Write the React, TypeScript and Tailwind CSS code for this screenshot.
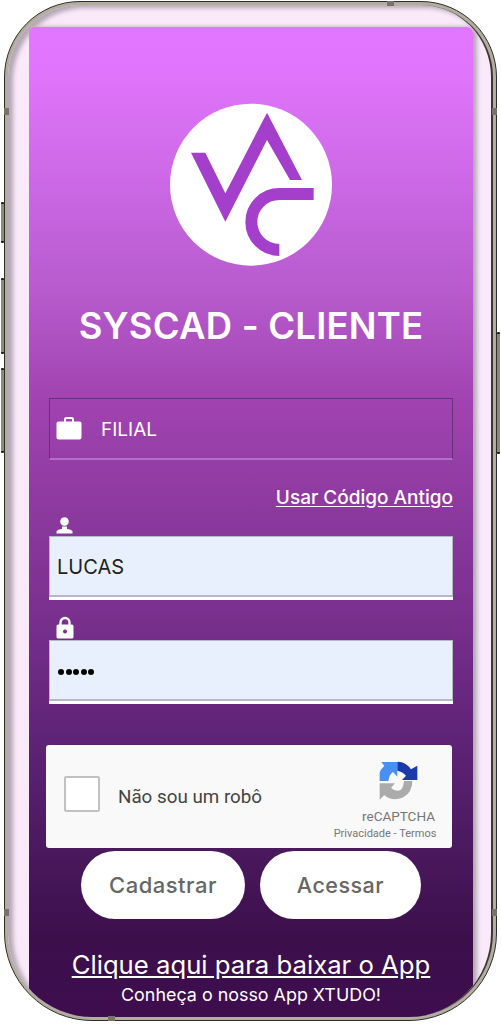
const sideKeys = "absolute w-[3px] bg-[#8f897a] border-y-2 border-[#222] rounded-[1px]";
const seam = "absolute bg-[#77736a]";

const LogoMark = () => (
  <svg className="w-[170px] h-[170px]" viewBox="0 0 510 510">
    <circle cx="255" cy="254" r="243" fill="#fff" />
    <path
      d="M75 158H118L178 280L303 38L408 240H372L303 120L178 365Z"
      fill="#a43fcc"
    />
    <path
      d="M443 282H340A84 84 0 0 0 340 450"
      fill="none"
      stroke="#a43fcc"
      strokeWidth="36"
    />
  </svg>
);

const Briefcase = () => (
  <svg className="w-[26px] h-[24px]" viewBox="0 0 26 24" fill="#fff">
    <path d="M8 6V3.500C8 1.800 9 1 10.500 1h5C17 1 18 1.800 18 3.500V6h-2V3.500c0-.4-.2-.6-.6-.6h-4.800c-.4 0-.6.2-.6.600V6Z" />
    <rect x="0.500" y="5.500" width="25" height="18" rx="2" />
  </svg>
);

const UserIcon = () => (
  <svg className="w-[17px] h-[17px]" viewBox="0 0 17 17" fill="#fff">
    <circle cx="8.500" cy="4.500" r="4.300" />
    <path d="M6 9.500h5v2.500c2.500.3 5 1 5.500 2.200V16.500H.500v-2.300C1 13 3.500 12.300 6 12Z" />
  </svg>
);

const LockIcon = () => (
  <svg className="w-[18px] h-[23px]" viewBox="0 0 18 23">
    <path d="M4.500 10V6.500a4.500 4.500 0 0 1 9 0V10" fill="none" stroke="#fff" strokeWidth="2.400" />
    <path
      fillRule="evenodd"
      d="M2 8.500h14a1.500 1.500 0 0 1 1.500 1.500v11a1.500 1.500 0 0 1-1.500 1.500H2A1.500 1.500 0 0 1 .5 21V10A1.500 1.500 0 0 1 2 8.500ZM9 13.500a2 2 0 1 0 0 4a2 2 0 0 0 0-4Z"
      fill="#fff"
    />
  </svg>
);

const RecaptchaIcon = () => (
  <svg className="w-[60px] h-[50px]" viewBox="0 0 180 150">
    <path d="M32 78V52Q35 42 46 33L37 21H85V65L72 51Q61 58 58 78Z" fill="#4a90f2" />
    <path d="M85 20Q110 20 126 43L145 32V75H99L111 62Q101 50 85 47Z" fill="#1c3aa9" />
    <path d="M130 78Q130 112 103 127Q70 142 46 120L32 134V85H78L66 98Q80 112 95 105Q103 98 105 78Z" fill="#ababab" />
  </svg>
);

export default function App() {
  return (
    <div className="relative w-[501px] h-[1024px] bg-white pt-px px-[4px] font-['Inter',sans-serif] overflow-hidden">
      <div className={`${sideKeys} left-[1px] top-[202px] h-[41px]`} />
      <div className={`${sideKeys} left-[1px] top-[278px] h-[76px]`} />
      <div className={`${sideKeys} left-[1px] top-[368px] h-[85px]`} />
      <div className={`${sideKeys} right-[1px] top-[332px] h-[122px]`} />

      <div className="h-[1020px] rounded-t-[76px] rounded-b-[88px] border border-[#2f2d2a] bg-[#b3ad9f] p-[3px]">
        <div className="h-full rounded-t-[72px] rounded-b-[84px] border-r-2 border-[#3a3835] bg-[#f9e9f9] overflow-hidden shadow-[inset_5px_3px_4px_#b5a8b5] pt-[22px] pl-[21px] pr-[18px]">
          <div className="h-[990px] rounded-t-[6px] bg-[linear-gradient(180deg,#e276ff_0%,#e074fb_5%,#b85ccf_26%,#a043b0_38%,#7c3190_58%,#62257a_70%,#4c1a60_82%,#3c0f4b_92%,#3e0d4e_100%)] shadow-[4px_0_4px_#b5a8b5] px-[20px] pt-[73px] flex flex-col">
            <div className="flex justify-center ml-[-1px]">
              <LogoMark />
            </div>

            <h1 className="mt-[28px] text-center text-white text-[36.500px] leading-[56px] font-semibold tracking-[0.2px] whitespace-nowrap">
              SYSCAD - CLIENTE
            </h1>

            <div className="mt-[44px] h-[62px] flex items-center border border-[#66307a] border-b-[#b170c2] border-b-2 pl-[6px] text-white">
              <div className="mt-[-2px]">
                <Briefcase />
              </div>
              <span className="ml-[19px] mt-[3px] text-[19px]">FILIAL</span>
            </div>

            <div className="mt-[26px] h-[24px] flex justify-end">
              <a className="text-white text-[19px] font-medium leading-[24px] underline underline-offset-2 whitespace-nowrap">
                Usar Código Antigo
              </a>
            </div>

            <div className="mt-[7px] h-[19px] pl-[7px]">
              <UserIcon />
            </div>
            <div className="h-[64px] bg-white">
              <div className="h-[61px] bg-[#e8f0fe] border border-b-2 border-[#b4b8c4] flex items-center pl-[7px] pt-[1px] text-[20px] text-[#222]">
                LUCAS
              </div>
            </div>

            <div className="mt-[16px] h-[24px] pl-[7px]">
              <LockIcon />
            </div>
            <div className="h-[64px] bg-white">
              <div className="h-[61px] bg-[#e8f0fe] border border-b-2 border-[#b4b8c4] flex items-center gap-[1.500px] pl-[8px] pt-[3px]">
                {[0, 1, 2, 3, 4].map((i) => (
                  <span key={i} className="w-[6px] h-[6px] rounded-full bg-black" />
                ))}
              </div>
            </div>

            <div className="mt-[41px] ml-[-3px] w-[406px] h-[103px] rounded-[3px] bg-[#f9f9f9] flex font-['Roboto',sans-serif]">
              <div className="ml-[18px] mt-[31px] w-[36px] h-[36px] rounded-[2px] bg-white border-2 border-[#c1c1c1]" />
              <span className="ml-[18px] mt-[40px] text-[18.800px] leading-[24px] text-[#444] whitespace-nowrap">Não sou um robô</span>
              <div className="ml-auto mr-[15px] flex flex-col items-center w-[104px]">
                <div className="mt-[10px] h-[50px] ml-[27px]">
                  <RecaptchaIcon />
                </div>
                <span className="mt-[3px] ml-[27px] text-[13.500px] leading-[16px] text-[#777]">reCAPTCHA</span>
                <span className="mt-[3px] text-[11px] leading-[14px] text-[#777] whitespace-nowrap">Privacidade - Termos</span>
              </div>
            </div>

            <div className="mt-[3px] flex gap-[15px] pl-[32px]">
              <button className="w-[164px] h-[68px] rounded-full bg-white text-[#666] text-[22px] font-medium tracking-[0.5px]">
                Cadastrar
              </button>
              <button className="w-[161px] h-[68px] rounded-full bg-white text-[#666] text-[21.500px] font-medium tracking-[0.5px]">
                Acessar
              </button>
            </div>

            <a className="mt-[29px] text-center text-white text-[25.700px] leading-[34px] underline underline-offset-2 whitespace-nowrap">
              Clique aqui para baixar o App
            </a>
            <p className="mt-px text-center text-white text-[17.900px] leading-[24px] whitespace-nowrap">
              Conheça o nosso App XTUDO!
            </p>
          </div>
        </div>
      </div>

      <div className={`${seam} left-[4px] top-[108px] w-[5px] h-[7px]`} />
      <div className={`${seam} right-[4px] top-[108px] w-[5px] h-[7px]`} />
      <div className={`${seam} left-[4px] top-[909px] w-[5px] h-[7px]`} />
      <div className={`${seam} right-[4px] top-[909px] w-[5px] h-[7px]`} />
      <div className={`${seam} left-[387px] top-[1px] w-[7px] h-[5px]`} />
      <div className={`${seam} left-[108px] top-[1016px] w-[7px] h-[5px]`} />
    </div>
  );
}
